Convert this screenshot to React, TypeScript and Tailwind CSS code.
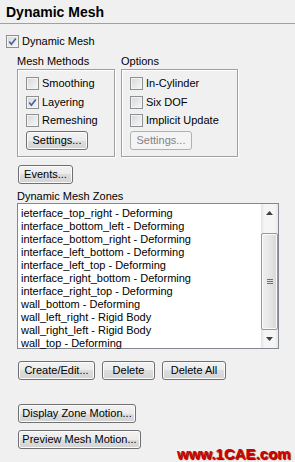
import React from "react";

const zones = [
  "ieterface_top_right - Deforming",
  "interface_bottom_left - Deforming",
  "interface_bottom_right - Deforming",
  "interface_left_bottom - Deforming",
  "interface_left_top - Deforming",
  "interface_right_bottom - Deforming",
  "interface_right_top - Deforming",
  "wall_bottom - Deforming",
  "wall_left_right - Rigid Body",
  "wall_right_left - Rigid Body",
  "wall_top - Deforming",
];

function CheckBox({ label, checked }: { label: string; checked?: boolean }) {
  return (
    <div className="flex h-[13px] items-center gap-[3px]">
      <span className="relative h-[13px] w-[13px] shrink-0 border border-[#8e8f8f] bg-[linear-gradient(135deg,#d5d8dc,#f7f7f7)] shadow-[inset_0_0_0_1px_#f4f4f4]">
        {checked && (
          <svg viewBox="0 0 11 11" className="absolute left-0 top-0 h-[11px] w-[11px]">
            <path d="M2.2 5.4 L4.4 8.2 L8.8 2.4" fill="none" stroke="#4a5f9c" strokeWidth="1.6" />
          </svg>
        )}
      </span>
      <span className="leading-[13px]">{label}</span>
    </div>
  );
}

function Button({ label, width, disabled }: { label: string; width: string; disabled?: boolean }) {
  return (
    <div
      className={
        disabled
          ? `${width} flex h-[19px] items-center justify-center rounded-[3px] border border-[#adb2b5] bg-[#f4f4f4] text-[#838383]`
          : `${width} flex h-[19px] items-center justify-center rounded-[3px] border border-[#707070] bg-[linear-gradient(#f2f2f2,#ebebeb_50%,#dddddd_50%,#d3d3d3)] shadow-[inset_0_0_0_1px_#fbfbfb]`
      }
    >
      {label}
    </div>
  );
}

function GroupBox({ title, width, children }: { title: string; width: string; children: React.ReactNode }) {
  return (
    <div className="flex flex-col">
      <div className="leading-[13px]">{title}</div>
      <div className={`${width} mt-[1px] h-[88px] border border-[#a0a0a0] pl-[8px] pt-[7px] shadow-[inset_1px_1px_0_#fff,1px_1px_0_#fff]`}>
        {children}
      </div>
    </div>
  );
}

export default function App() {
  return (
    <div className="relative h-[462px] w-[295px] overflow-hidden bg-[#f0f0f0] font-['Liberation_Sans',Arial,sans-serif] text-[11px] text-black">
      <div className="h-[24px] border-b border-[#a0a0a0] pl-[6px] pt-[4px]">
        <div className="text-[14px] font-bold leading-[17px]">Dynamic Mesh</div>
      </div>

      <div className="mt-[11px] pl-[6px]">
        <CheckBox label="Dynamic Mesh" checked />
      </div>

      <div className="mt-[7px] flex gap-[6px] pl-[17px]">
        <GroupBox title="Mesh Methods" width="w-[98px]">
          <CheckBox label="Smoothing" />
          <div className="mt-[6px]">
            <CheckBox label="Layering" checked />
          </div>
          <div className="mt-[5px]">
            <CheckBox label="Remeshing" />
          </div>
          <div className="mt-[4px]">
            <Button label="Settings..." width="w-[62px]" />
          </div>
        </GroupBox>
        <GroupBox title="Options" width="w-[117px]">
          <CheckBox label="In-Cylinder" />
          <div className="mt-[6px]">
            <CheckBox label="Six DOF" />
          </div>
          <div className="mt-[5px]">
            <CheckBox label="Implicit Update" />
          </div>
          <div className="mt-[4px]">
            <Button label="Settings..." width="w-[62px]" disabled />
          </div>
        </GroupBox>
      </div>

      <div className="mt-[8px] pl-[18px]">
        <Button label="Events..." width="w-[55px]" />
      </div>

      <div className="mt-[6px] pl-[17px] leading-[13px]">Dynamic Mesh Zones</div>

      <div className="ml-[17px] flex h-[146px] w-[262px] border border-[#828790] bg-white">
        <div className="flex-1 pl-[3px] pt-[3px]">
          {zones.map((z) => (
            <div key={z} className="h-[13px] leading-[13px] whitespace-nowrap">
              {z}
            </div>
          ))}
        </div>
        <div className="flex w-[17px] flex-col bg-[linear-gradient(90deg,#e3e3e3,#f5f5f5_20%,#f5f5f5_80%,#e8e8e8)]">
          <div className="flex h-[17px] items-center justify-center">
            <svg width="7" height="4" viewBox="0 0 7 4">
              <path d="M0 4 L3.5 0 L7 4 Z" fill="#404040" />
            </svg>
          </div>
          <div className="mt-[12px] flex h-[97px] items-center justify-center rounded-[2px] border border-[#979797] bg-[linear-gradient(90deg,#f0f0f0,#e6e6e6_50%,#d6d6d6)] shadow-[inset_0_0_0_1px_#fafafa]">
            <div className="flex flex-col gap-[1px]">
              <div className="h-[1px] w-[6px] bg-[#6f6f6f]" />
              <div className="h-[1px] w-[6px] bg-[#6f6f6f]" />
              <div className="h-[1px] w-[6px] bg-[#6f6f6f]" />
            </div>
          </div>
          <div className="flex flex-1 items-center justify-center">
            <svg width="7" height="4" viewBox="0 0 7 4">
              <path d="M0 0 L3.5 4 L7 0 Z" fill="#404040" />
            </svg>
          </div>
        </div>
      </div>

      <div className="mt-[12px] flex gap-[7px] pl-[18px]">
        <Button label="Create/Edit..." width="w-[77px]" />
        <Button label="Delete" width="w-[53px]" />
        <Button label="Delete All" width="w-[64px]" />
      </div>

      <div className="mt-[24px] pl-[18px]">
        <Button label="Display Zone Motion..." width="w-[118px]" />
      </div>
      <div className="mt-[7px] pl-[18px]">
        <Button label="Preview Mesh Motion..." width="w-[123px]" />
      </div>

      <div className="absolute left-[177px] top-[446px] text-[15px] font-bold leading-[15px] text-[#d40000] [text-shadow:1px_1px_1px_#5a0000]">
        www.1CAE.com
      </div>
    </div>
  );
}
